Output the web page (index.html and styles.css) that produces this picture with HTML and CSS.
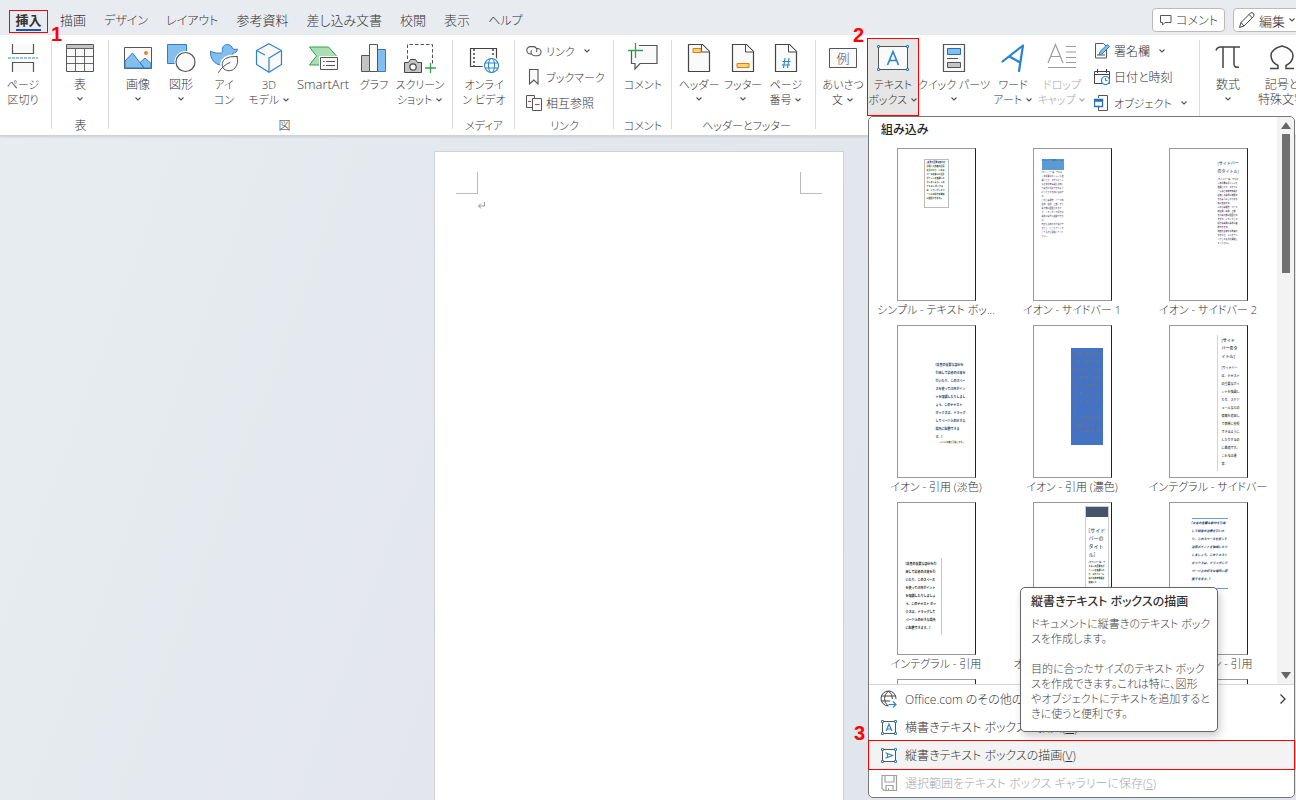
FILE: index.html
```html
<!DOCTYPE html>
<html lang="ja">
<head>
<meta charset="utf-8">
<title>文書 - 挿入</title>
<link rel="stylesheet" href="styles.css">
</head>
<body>
<svg class="defs" width="0" height="0" aria-hidden="true">
  <symbol id="chev" viewBox="0 0 8 6"><path d="M1.500 1.500 4 4 6.500 1.500" fill="none" stroke="currentColor" stroke-width="1.100"/></symbol>
</svg>
<div class="app">
  <header class="tabbar">
    <nav class="tabs">
      <button class="tab tab-active">挿入<span class="step step-1">1</span></button>
      <button class="tab">描画</button>
      <button class="tab kana">デザイン</button>
      <button class="tab kana">レイアウト</button>
      <button class="tab">参考資料</button>
      <button class="tab">差し込み文書</button>
      <button class="tab">校閲</button>
      <button class="tab">表示</button>
      <button class="tab kana">ヘルプ</button>
    </nav>
    <div class="actions">
      <button class="action kana"><svg width="14" height="14" viewBox="0 0 14 14"><path d="M1.500 2.500h10.500v7H6L3.500 12V9.500h-2z" fill="none" stroke="#555"/></svg>コメント</button>
      <button class="action"><svg width="18" height="18" viewBox="0 0 18 18"><path d="M1.500 16.500 3 11.500 12.500 2q1.500-1 3 .5 1.200 1.500 0 3L6 15zM11 3.500l3.500 3.500M3 11.500 6 15" fill="none" stroke="#444"/></svg>編集<svg class="chev"><use href="#chev"/></svg></button>
    </div>
  </header>

  <div class="ribbon">
    <section class="group group-break">
      <div class="tools">
        <button class="tool w46"><svg class="ico" viewBox="0 0 30 30"><g fill="#fafafa" stroke="#555" stroke-width="1.200"><path d="M4.500 1v9.500h21V1M4.500 29V19.500h21V29"/></g><path d="M0 15h30" stroke="#2b88c8" stroke-dasharray="3 1"/></svg><span>ページ<br>区切り</span></button>
      </div>
      <h2 class="group-name"></h2>
    </section>
    <section class="group group-table">
      <div class="tools">
        <button class="tool w46"><svg class="ico" viewBox="0 0 30 30"><path d="M1.500 1.500h27v27h-27z" fill="#fafafa" stroke="#555"/><path d="M2 2h26v3.500H2z" fill="#c4c4c4"/><path d="M1 5.500h28M1 13.500h28M1 20.500h28M10.500 6v22.500M19.500 6v22.500" stroke="#555" stroke-width=".9"/></svg><span class="kanji">表</span><svg class="chev"><use href="#chev"/></svg></button>
      </div>
      <h2 class="group-name kanji">表</h2>
    </section>
    <section class="group group-figure">
      <div class="tools">
        <button class="tool w44"><svg class="ico" viewBox="0 0 30 30"><path d="M1.500 4.500h27v21h-27z" fill="#fafafa" stroke="#555"/><path d="M2 18 9.500 10 21 25H2zM17 19.500l5-4.500 6 5.500V25h-7z" fill="#83beec" stroke="#2d7fc4"/><circle cx="23" cy="10" r="2" fill="#f08019"/></svg><span class="kanji">画像</span><svg class="chev"><use href="#chev"/></svg></button>
        <button class="tool w42"><svg class="ico" viewBox="0 0 30 30"><path d="M1.500 1.500h19v19h-19z" fill="#83beec" stroke="#2d7fc4"/><circle cx="19.500" cy="19" r="11" fill="#fff"/><circle cx="19.500" cy="19" r="9.500" fill="#fafafa" stroke="#555" stroke-width="1.200"/></svg><span class="kanji">図形</span><svg class="chev"><use href="#chev"/></svg></button>
        <button class="tool w44"><svg class="ico" viewBox="0 0 30 30"><g stroke-linejoin="round" stroke-linecap="round"><path d="M1.500 8.500q6 2.500 11 1.500 1.500-.5.800-2.500C13 3.500 15.500 1.500 18.500 1.500c2.500 0 4.500 1.800 5 4 1.500 1 3.500 1 5 .5-.5 3-2.500 4-4.500 4-1 8-4 12-11 12C5 22 1 15 1.500 8.500z" fill="#83beec" stroke="#2d7fc4"/><path d="M28 13.500q2 7-2 11.500c-3 3.500-8 3.500-11 1-3-3-2-8 1.500-10.500q4-2.500 11.500-2z" fill="#fff" stroke="#fff" stroke-width="4"/><path d="M28 13.500q2 7-2 11.500c-3 3.500-8 3.500-11 1-3-3-2-8 1.500-10.500q4-2.500 11.500-2z" fill="#fafafa" stroke="#555"/><path d="M9.500 29.500q4-7 11.500-10" fill="none" stroke="#555"/></g></svg><span>アイ<br>コン</span></button>
        <button class="tool w46"><svg class="ico" viewBox="0 0 30 30"><g fill="#fafafa" stroke="#3080c6" stroke-width="1.200"><path d="M15 .8 27.500 7.500v14L15 29.200 2.500 21.500v-14z"/><path d="M2.500 7.500 11 12M27.500 7.500 15 15v14"/></g></svg><span>3D<br>モデル <svg class="chev inl"><use href="#chev"/></svg></span></button>
        <button class="tool w62"><svg class="ico" viewBox="0 0 30 30"><path d="M1.500 4h19l8 9-8 9h-19l7-9z" fill="#a8dfb4" stroke="#35a04e"/><path d="M11 13h19v14H11z" fill="#fff"/><path d="M12.500 14.500h17v12h-17z" fill="#fafafa" stroke="#555"/><path d="M15 18.500h1.500m1.500 0h9M15 22.500h1.500m1.500 0h9" stroke="#555"/></svg><span class="latin">SmartArt</span></button>
        <button class="tool w40"><svg class="ico" viewBox="0 0 30 30"><g stroke="#555"><path d="M2.500 12.500h8v16h-8z" fill="#c4c4c4"/><path d="M18.500 6.500h8v22h-8z" fill="#83beec" stroke="#2d7fc4"/><path d="M10.500 1.500h8v27h-8z" fill="#fafafa"/></g></svg><span>グラフ</span></button>
        <button class="tool w52"><svg class="ico ico-wide" viewBox="0 0 34 30"><path d="M4.500 16V1.500h25v20" fill="none" stroke="#555" stroke-dasharray="3.500 2"/><path d="M1.500 19.500h4l2-3h5l2 3h4v10h-17z" fill="#c4c4c4" stroke="#444"/><circle cx="10" cy="24" r="3.200" fill="#fff" stroke="#444" stroke-width="1.200"/><path d="M27.500 20v10.500M22 25h11" stroke="#35a04e" stroke-width="1.300"/></svg><span>スクリーン<br>ショット <svg class="chev inl"><use href="#chev"/></svg></span></button>
      </div>
      <h2 class="group-name kanji">図</h2>
    </section>
    <section class="group group-media">
      <div class="tools">
        <button class="tool w52"><svg class="ico" viewBox="0 0 30 30"><path d="M1.500 5.500h26v18h-26z" fill="#fafafa" stroke="#444" stroke-width="1.200"/><path d="M5 6v18M24 6v18" stroke="#444" stroke-width="1.500" stroke-dasharray="2 2"/><circle cx="22.500" cy="22.500" r="9" fill="#fff"/><g fill="#fff" stroke="#2884cc" stroke-width="1.100"><circle cx="22.500" cy="22.500" r="7"/><ellipse cx="22.500" cy="22.500" rx="3" ry="7"/><path d="M16 20h13M16 25h13"/></g></svg><span>オンライ<br>ン ビデオ</span></button>
      </div>
      <h2 class="group-name">メディア</h2>
    </section>
    <section class="group group-link">
      <div class="rows">
        <button class="row"><svg width="16" height="16" viewBox="0 0 16 16"><g fill="none" stroke="#555" stroke-width="1.100"><path d="M6 11H4.500a3.700 3.700 0 0 1 0-7.400h3a3.700 3.700 0 0 1 3 5.500M10 5.500h1.500a3.600 3.600 0 0 1 0 7.200h-3a3.600 3.600 0 0 1-3-5.500"/></g></svg><span>リンク</span><svg class="chev"><use href="#chev"/></svg></button>
        <button class="row"><svg width="16" height="18" viewBox="0 0 16 18"><path d="M3.500 1.500h8.500v14.500L7.800 12l-4.300 4z" fill="#fafafa" stroke="#555" stroke-width="1.100"/></svg><span>ブックマーク</span></button>
        <button class="row kanji"><svg width="16" height="16" viewBox="0 0 16 16"><path d="M.5.5h8v12h-8z" fill="#fafafa" stroke="#555"/><path d="M2 6.500h3" stroke="#e33"/><path d="M6.500 3.500h9v12h-9z" fill="#fff" stroke="#555"/><path d="M9 9.500h4.500" stroke="#e33"/></svg><span>相互参照</span></button>
      </div>
      <h2 class="group-name">リンク</h2>
    </section>
    <section class="group group-comment">
      <div class="tools">
        <button class="tool w52"><svg class="ico" viewBox="0 0 30 30"><path d="M3.500 8V20.500h3.500V26l5-5.500h17V2.500H11" fill="#fafafa" stroke="#555" stroke-width="1.200"/><path d="M0 7.500h15M7.500 0v15" stroke="#35a04e" stroke-width="1.300"/></svg><span>コメント</span></button>
      </div>
      <h2 class="group-name">コメント</h2>
    </section>
    <section class="group group-header">
      <div class="tools">
        <button class="tool w44"><svg class="ico" viewBox="0 0 30 30"><path d="M4.500 1.500h14l7 7v20h-21z" fill="#fafafa" stroke="#444" stroke-width="1.200"/><path d="M17.500 1.500v7.500h8" fill="#fff" stroke="#444"/><path d="M9 5.500h8v4H9z" fill="#f8d27c" stroke="#e07b16"/></svg><span>ヘッダー</span><svg class="chev"><use href="#chev"/></svg></button>
        <button class="tool w44"><svg class="ico" viewBox="0 0 30 30"><path d="M4.500 1.500h14l7 7v20h-21z" fill="#fafafa" stroke="#444" stroke-width="1.200"/><path d="M17.500 1.500v7.500h8" fill="#fff" stroke="#444"/><path d="M9 20.500h12v4H9z" fill="#f8d27c" stroke="#e07b16"/></svg><span>フッター</span><svg class="chev"><use href="#chev"/></svg></button>
        <button class="tool w42"><svg class="ico" viewBox="0 0 30 30"><path d="M4.500 1.500h14l7 7v20h-21z" fill="#fafafa" stroke="#444" stroke-width="1.200"/><path d="M17.500 1.500v7.500h8" fill="#fff" stroke="#444"/><path d="M14 15l-1.500 10M18 15l-1.500 10M11.500 18.500h8M11 22h8" stroke="#2884cc" stroke-width="1.100"/></svg><span>ページ<br>番号 <svg class="chev inl"><use href="#chev"/></svg></span></button>
      </div>
      <h2 class="group-name">ヘッダーとフッター</h2>
    </section>
    <section class="group group-text">
      <div class="tools">
        <button class="tool w50"><svg class="ico" viewBox="0 0 30 30"><path d="M1.500 5.500h27v19h-27z" fill="#fafafa" stroke="#555"/><text x="15" y="20" text-anchor="middle" class="sample">例</text></svg><span>あいさつ<br>文 <svg class="chev inl"><use href="#chev"/></svg></span></button>
        <div class="anchor">
          <button class="tool w50 tool-open"><svg class="ico ico-wide" viewBox="0 0 34 30"><path d="M2.500 3.500h29v23h-29z" fill="#fafafa" stroke="#555"/><g fill="#fff" stroke="#2884cc"><path d="M1.500 2.500h2v2h-2zM30.500 2.500h2v2h-2zM1.500 25.500h2v2h-2zM30.500 25.500h2v2h-2z"/></g><path d="M11.500 22 17 8.500 22.500 22M13.500 17.500h7" fill="none" stroke="#2884cc" stroke-width="1.600"/></svg><span>テキスト<br>ボックス <svg class="chev inl"><use href="#chev"/></svg></span></button>
          <span class="step step-2">2</span>

          <div class="dropdown">
            <h3 class="dd-title">組み込み</h3>
            <div class="gallery">
              <div class="grid">
                <button class="card"><span class="sheet"><span class="copy boxed">[文書の重要な部分を引用して読者の注意を引いたり、このスペースを使って注目ポイントを強調したりしましょう。このテキスト ボックスは、ドラッグしてページ上の好きな場所に配置できます。]</span></span><span class="card-name">シンプル - テキスト ボッ...</span></button>
                <button class="card"><span class="sheet"><span class="copy side1"><span class="banner">[サイドバーのタイトル]</span>[サイドバーは、テキストの重要なポイントを強調したり、スケジュールなどの参考情報を追加して簡単に参照できるようにしたりするのに最適です。<br>これらは通常、ページの左側、右側、上部、または下部に配置されますが、ドラッグして好きな場所に簡単に移動できます。<br>内容を追加する準備ができたら、ここをクリックして入力を開始してください。]</span></span><span class="card-name">イオン - サイドバー 1</span></button>
                <button class="card"><span class="sheet"><span class="copy side2"><b>[サイドバー<br>のタイトル]</b>[サイドバーは、テキストの重要なポイントを強調したり、スケジュールなどの参考情報を追加して簡単に参照できるようにしたりするのに最適です。<br>これらは通常、ページの左側、右側、上部、または下部に配置されますが、ドラッグして好きな場所に簡単に移動できます。<br>内容を追加する準備ができたら、ここをクリックして入力を開始してください。]</span></span><span class="card-name">イオン - サイドバー 2</span></button>

                <button class="card"><span class="sheet"><span class="copy quote-light">[文書の重要な部分を引用して読者の注意を引いたり、このスペースを使って注目ポイントを強調したりしましょう。このテキスト ボックスは、ドラッグしてページ上の好きな場所に配置できます。]<small>[ここに出典を記載します。]</small></span></span><span class="card-name">イオン - 引用 (淡色)</span></button>
                <button class="card"><span class="sheet"><span class="copy quote-dark">[文書の重要な部分を引用して読者の注意を引いたり、このスペースを使って注目ポイントを強調したりしましょう。このテキスト ボックスは、ドラッグしてページ上の好きな場所に配置できます。]<small>[ここに出典を記載します。]</small></span></span><span class="card-name">イオン - 引用 (濃色)</span></button>
                <button class="card"><span class="sheet"><span class="copy integral"><b>[サイド<br>バーのタ<br>イトル]</b>[サイドバーは、テキストの重要なポイントを強調したり、スケジュールなどの情報を追加して簡単に参照できるようにしたりするのに最適です。<br>これらは通常、</span></span><span class="card-name">インテグラル - サイドバー</span></button>

                <button class="card"><span class="sheet"><span class="copy integral-quote">[文書の重要な部分を引用して読者の注意を引いたり、このスペースを使って注目ポイントを強調したりしましょう。このテキスト ボックスは、ドラッグしてページ上の好きな場所に配置できます。]</span></span><span class="card-name">インテグラル - 引用</span></button>
                <button class="card"><span class="sheet"><span class="copy austin"><b>[サイド<br>バーの<br>タイト<br>ル]</b>[サイドバーは、テキストの重要なポイントを強調したり、スケジュールなどの参考情報を追加して</span></span><span class="card-name">オースティン - サイドバー</span></button>
                <button class="card"><span class="sheet"><span class="copy austin-quote">[文書の重要な部分を引用して読者の注意を引いたり、このスペースを使って注目ポイントを強調したりしましょう。このテキスト ボックスは、ドラッグしてページ上の好きな場所に配置できます。]</span></span><span class="card-name">オースティン - 引用</span></button>

                <button class="card" aria-label="次の行 1"><span class="sheet"></span></button>
                <button class="card" aria-label="次の行 2"><span class="sheet"></span></button>
                <button class="card" aria-label="次の行 3"><span class="sheet"></span></button>
              </div>
            </div>
            <div class="scroll"><i class="arrow-up"></i><i class="thumb"></i><i class="arrow-down"></i></div>
            <div class="menu">
              <button class="item"><svg width="18" height="18" viewBox="0 0 18 18"><g fill="none" stroke="#444"><path d="M8.500 16A7.500 7.500 0 1 1 16 9M8 16Q4.500 13 4.500 8.500T8.500 1q4 3 4 8M1.500 6h14M1 11h9"/></g><path d="M8.500 14.500H16M13 11.500l3 3-3 3" fill="none" stroke="#2884cc" stroke-width="1.200"/></svg><span>Office.com のその他の</span><svg class="more" width="8" height="12" viewBox="0 0 8 12"><path d="M1.500 1.500 6 6l-4.500 4.500" fill="none" stroke="#333" stroke-width="1.200"/></svg></button>
              <button class="item"><svg width="18" height="18" viewBox="0 0 18 18"><path d="M2.500 3.500h13v12h-13z" fill="#fff" stroke="#555"/><g fill="#fff" stroke="#2884cc"><path d="M1.500 2.500h2v2h-2zM14.500 2.500h2v2h-2zM1.500 14.500h2v2h-2zM14.500 14.500h2v2h-2z"/></g><path d="M6.200 13 9 6l2.800 7M7 11h4" fill="none" stroke="#2884cc" stroke-width="1.200"/></svg><span>横書きテキスト ボックスの描画(<u>H</u>)</span></button>
              <button class="item item-hot"><svg width="18" height="18" viewBox="0 0 18 18"><path d="M2.500 3.500h13v12h-13z" fill="#fff" stroke="#555"/><g fill="#fff" stroke="#2884cc"><path d="M1.500 2.500h2v2h-2zM14.500 2.500h2v2h-2zM1.500 14.500h2v2h-2zM14.500 14.500h2v2h-2z"/></g><path d="M5.500 6.700 12.500 9.500l-7 2.800M7.500 7.500v4" fill="none" stroke="#2884cc" stroke-width="1.200"/></svg><span>縦書きテキスト ボックスの描画(<u>V</u>)</span><span class="step step-3">3</span></button>
              <button class="item" disabled><svg width="18" height="18" viewBox="0 0 18 18"><g fill="none" stroke="#a0a0a0" stroke-width="1.200"><path d="M2 1.500h14.500v15H4L2 14.500zM5 1.500v6.500h9V1.500M6 16.500V11.500h7v5M8.500 14v2.500"/></g></svg><span>選択範囲をテキスト ボックス ギャラリーに保存(<u>S</u>)</span></button>
            </div>
            <div class="tooltip" role="tooltip">
              <strong>縦書きテキスト ボックスの描画</strong>
              <p>ドキュメントに縦書きのテキスト ボック<br>スを作成します。</p>
              <p>目的に合ったサイズのテキスト ボック<br>スを作成できます。これは特に、図形<br>やオブジェクトにテキストを追加すると<br>きに使うと便利です。</p>
            </div>
          </div>
        </div>
        <button class="tool w72"><svg class="ico" viewBox="0 0 30 30"><path d="M4.500 1.500h21v27h-21z" fill="#fafafa" stroke="#555" stroke-width="1.200"/><path d="M8.500 5.500h13v6h-13z" fill="#83beec" stroke="#2370b8"/><path d="M8 15.500h11" stroke="#555"/><path d="M8.500 19.500h13v5h-13z" fill="#c4c4c4" stroke="#555"/></svg><span>クイック パーツ</span><svg class="chev"><use href="#chev"/></svg></button>
        <button class="tool w46"><svg class="ico" viewBox="0 0 30 30"><path d="M4.500 18.500 25 2.500 21 28M11.500 13.500 22 19.500" fill="none" stroke="#2884cc" stroke-width="2.200" stroke-linecap="round" stroke-linejoin="round"/></svg><span>ワード<br>アート <svg class="chev inl"><use href="#chev"/></svg></span></button>
        <button class="tool w52" disabled><svg class="ico" viewBox="0 0 30 30"><g fill="none" stroke="#9c9c9c" stroke-width="1.200"><path d="M1 20 8.500 1.500 16 20M4 13.500h9M19 3.500h10M19 9h10M19 14.500h10M19 19.500h10M1 24.500h28"/></g></svg><span>ドロップ<br>キャップ <svg class="chev inl"><use href="#chev"/></svg></span></button>
        <div class="rows rows-text">
          <button class="row kanji"><svg width="16" height="18" viewBox="0 0 16 18"><path d="M1.500 1.500h8l3 3V16h-11z" fill="#fafafa" stroke="#555"/><path d="M3 13h8" stroke="#555"/><path d="M5 13l1-3.500 7.500-7 2 2L8 12z" fill="#83beec" stroke="#2884cc"/></svg><span>署名欄</span><svg class="chev"><use href="#chev"/></svg></button>
          <button class="row kanji"><svg width="16" height="16" viewBox="0 0 16 16"><path d="M.5 2.500h15v12H.5zM.5 5.500h15M3.500 0v4M12.500 0v4" fill="#fafafa" stroke="#444"/><circle cx="11.500" cy="11.500" r="4" fill="#fff" stroke="#2884cc" stroke-width="1.200"/><path d="M11.500 9v2.500h2" fill="none" stroke="#2884cc"/></svg><span>日付と時刻</span></button>
          <button class="row"><svg width="16" height="16" viewBox="0 0 16 16"><path d="M4.500 3V.5h9v15h-9V12" fill="#fafafa" stroke="#555"/><path d="M.5 4.500h8v7h-8zM.5 6h8" fill="#fff" stroke="#2370b8" stroke-width="1.300"/></svg><span>オブジェクト</span><svg class="chev"><use href="#chev"/></svg></button>
        </div>
      </div>
      <h2 class="group-name"></h2>
    </section>
    <section class="group group-symbol">
      <div class="tools">
        <button class="tool w50"><svg class="ico" viewBox="0 0 30 30"><path d="M3 7.500Q4 4 8 4h19M10 4v21M21 4v17q0 4 5 3" fill="none" stroke="#444" stroke-width="1.500"/></svg><span class="kanji">数式</span><svg class="chev"><use href="#chev"/></svg></button>
        <button class="tool w58"><svg class="ico" viewBox="0 0 30 30"><path d="M3 25.500h8v-3Q4 19 4 12.500T15 3q11 3 11 9.500T19 22.500v3h8" fill="none" stroke="#444" stroke-width="1.500"/></svg><span class="kanji">記号と<br>特殊文字</span></button>
      </div>
      <h2 class="group-name"></h2>
    </section>
  </div>

  <main class="workspace">
    <article class="page">
      <div class="margins"><i class="corner corner-l"></i><i class="corner corner-r"></i></div>
      <svg class="mark" width="9" height="9" viewBox="0 0 9 9"><path d="M7.500 1v4H1.500M4 2.500 1.500 5 4 7.500" fill="none" stroke="#999"/></svg>
    </article>
  </main>
</div>
</body>
</html>
```
FILE: styles.css
```css
* { box-sizing: border-box; }
body {
  margin: 0;
  font-family: "Open Sans", "Noto Sans CJK JP", sans-serif;
  font-feature-settings: "palt";
  font-weight: 300;
  font-size: 11px;
  color: #333;
  overflow: hidden;
}
button {
  font: inherit;
  font-feature-settings: inherit;
  color: inherit;
  background: none;
  border: 0;
  padding: 0;
  margin: 0;
}
h2, h3, p { margin: 0; font-weight: inherit; font-size: inherit; }
svg { flex: none; }
.defs { position: absolute; }
.app { display: flex; flex-direction: column; height: 100vh; background: linear-gradient(110deg, #e8edf1 0%, #e3e7ed 45%, #dfe4ec 100%); }
.kanji { font-size: 12px; }
.latin { font-size: 13px; }

/* Tabs */
.tabbar { display: flex; justify-content: space-between; height: 35px; flex: none; background: #e8ecf0; }
.tabs { display: flex; gap: 18px; padding: 10px 0 2px 9px; font-size: 13px; line-height: 21px; }
.tab { display: flex; white-space: nowrap; }
.tab.kana, .action.kana { font-size: 12px; }
.tab-active { position: relative; z-index: 3; width: 39px; justify-content: center; margin-right: -6px; font-weight: 700; border: 1px solid #f00; line-height: 18px; }
.tab-active::after { content: ""; position: absolute; left: 6px; right: 6px; bottom: 1px; height: 2px; background: #1b57b0; }
.actions { display: flex; gap: 8px; align-items: center; padding-top: 5px; margin-right: -5px; }
.action {
  display: flex; align-items: center; gap: 3px; height: 24px; padding: 0 6px;
  background: #fff; border: 1px solid #bbb; border-radius: 4px; font-size: 13px; white-space: nowrap;
}
.action:last-child { padding: 0 4px; }
.step { position: absolute; font: 700 20px/20px "Liberation Sans", sans-serif; color: #f00; }
.step-1 { left: 41px; top: 13px; }
.step-2 { left: -15px; top: -14px; }
.step-3 { left: -15px; top: -18px; }

/* Ribbon */
.ribbon { display: flex; flex: none; height: 101px; background: #fff; border-bottom: 1px solid #cfd3d8; box-shadow: 0 1px 2px #c8ccd2; position: relative; z-index: 2; }
.group { display: flex; flex-direction: column; justify-content: space-between; padding: 4px 0 1px; flex: none; position: relative; }
.group:not(:last-child)::after { content: ""; position: absolute; right: 0; top: 5px; bottom: 6px; width: 1px; background: #dcdcdc; }
.group-name { text-align: center; line-height: 17px; min-height: 17px; white-space: nowrap; }
.tools { display: flex; height: 76px; }
.tool { display: flex; flex-direction: column; align-items: center; padding-top: 4px; line-height: 15px; white-space: nowrap; height: 76px; flex: none; }
.tool > span { margin-top: 4px; }
.ico { width: 30px; height: 30px; }
.ico-wide { width: 34px; }
.chev { width: 8px; height: 6px; color: #555; }
.tool > .chev { margin-top: 4px; }
.inl { vertical-align: 1px; }
.sample { font-size: 13px; fill: #555; }
.w40 { width: 40px; } .w42 { width: 42px; } .w44 { width: 44px; } .w46 { width: 46px; }
.w50 { width: 50px; } .w52 { width: 52px; } .w58 { width: 58px; } .w62 { width: 62px; } .w72 { width: 72px; }
button:disabled, button:disabled .chev { color: #a8a8a8; }
.group-break { width: 52px; }
.group-table { width: 57px; padding-left: 5px; padding-right: 5px; }
.group-figure { width: 344px; padding-left: 7px; }
.group-media { width: 62px; padding-left: 5px; padding-right: 5px; }
.group-link { width: 99px; }
.group-comment { width: 58px; padding-left: 3px; padding-right: 3px; }
.group-header { width: 144px; padding-left: 5px; }
.group-text { width: 384px; padding-left: 2px; }
.group-symbol { padding-left: 3px; }
.rows { display: flex; flex-direction: column; gap: 2px; padding-left: 11px; }
.rows-text { padding-left: 6px; }
.row { display: flex; align-items: center; gap: 4px; height: 24px; white-space: nowrap; }
.row .chev { margin-left: 4px; }
.anchor { position: relative; }
.tool-open { background: #e6e6e6; outline: 1px solid #f00; }

/* Text box gallery */
.dropdown {
  position: absolute; left: 0; top: 77px; width: 427px; z-index: 5;
  display: grid; grid-template-columns: 1fr 17px; grid-template-rows: 31px 536px auto;
  background: #fff; border: 1px solid #777; border-radius: 5px;
}
.dd-title { padding-left: 12px; line-height: 26px; font-size: 12px; font-weight: 500; color: #222; }
.gallery { grid-row: 2; overflow: hidden; }
.grid { display: grid; grid-template-columns: repeat(3, 136px); }
.card { display: flex; flex-direction: column; align-items: center; height: 177px; padding-right: 2px; }
.sheet { display: block; width: 79px; height: 153px; border: 1px solid #999; border-right-color: #222; overflow: hidden; flex: none; }
.card-name { line-height: 18px; white-space: nowrap; }
.copy { display: block; text-align: left; font-size: 2px; line-height: 4px; font-weight: 700; color: #222; font-feature-settings: normal; word-break: break-all; }
.copy b, .copy small { display: block; font-weight: 500; white-space: nowrap; }
.boxed { width: 25px; height: 49px; margin: 10px 0 0 26px; padding: 1px 2px; border: 1px solid #bbb; }
.side1 { width: 22px; margin: 10px 0 0 8px; font-weight: 400; }
.banner { display: block; height: 11px; margin-bottom: 1px; background: #5a9bd5; color: #444; }
.side2 { width: 21px; margin: 11px 0 0 48px; font-weight: 500; }
.side2 b { font-size: 4px; line-height: 8px; color: #44546a; margin-bottom: 2px; }
.quote-light { width: 30px; margin: 35px 0 0 38px; font-size: 3px; line-height: 8px; color: #223a6a; }
.quote-light small, .quote-dark small { font-size: 2px; line-height: 4px; margin-left: 4px; color: #222; }
.quote-dark { width: 32px; height: 97px; margin: 22px 0 0 37px; padding: 2px; background: #4472c4; color: #777; font-size: 3px; line-height: 8px; font-weight: 400; }
.quote-dark small { color: #777; }
.integral { width: 23px; height: 136px; margin: 9px 0 0 47px; padding: 2px 0 0 4px; border-left: 1px solid #f5c9ae; font-size: 3px; line-height: 8px; font-weight: 500; }
.integral b { font-size: 4px; margin-bottom: 3px; }
.integral-quote { width: 36px; height: 77px; margin: 55px 0 0 8px; padding: 2px 4px 0 0; border-right: 1px solid #f5b9a0; font-size: 3px; line-height: 8px; }
.austin { width: 24px; height: 146px; margin: 3px 0 0 51px; padding: 19px 2px 0 3px; border: 1px solid #ccc; background: linear-gradient(#44546a 10px, #fff 10px); }
.austin b { font-size: 5px; line-height: 8px; color: #44546a; margin-bottom: 3px; }
.austin-quote { width: 36px; height: 71px; margin: 15px 0 0 22px; border-top: 1px solid #6f9bd8; border-bottom: 1px solid #6f9bd8; font-size: 3px; line-height: 8px; font-style: italic; color: #223a6a; }
.scroll { grid-column: 2; grid-row: 1 / 3; display: flex; flex-direction: column; align-items: center; padding: 5px 0; background: #f3f3f3; border-radius: 0 5px 0 0; }
.arrow-up { border: 5px solid transparent; border-top: 0; border-bottom: 7px solid #666; }
.arrow-down { margin-top: auto; border: 5px solid transparent; border-bottom: 0; border-top: 7px solid #666; }
.thumb { width: 8px; height: 139px; margin-top: 5px; background: #707070; }
.menu { grid-column: 1 / 3; border-top: 1px solid #d8d8d8; font-size: 12px; }
.item { display: flex; align-items: center; gap: 7px; width: 100%; height: 28px; padding: 0 7px 0 11px; white-space: nowrap; position: relative; }
.item-hot { background: #f3f3f3; outline: 1px solid #f00; }
.more { margin-left: auto; }
.tooltip {
  position: absolute; left: 151px; top: 470px; width: 198px; padding: 6px 10px 10px;
  display: flex; flex-direction: column; background: #fff; border: 1px solid #666; border-radius: 5px;
  box-shadow: 2px 4px 8px #0003; line-height: 15px; white-space: nowrap; color: #444;
}
.tooltip strong { font-size: 12px; font-weight: 500; line-height: 16px; margin-bottom: 6px; color: #333; }
.tooltip p + p { margin-top: 15px; }

/* Document */
.workspace { flex: 1; display: flex; justify-content: center; padding: 15px 18px 0 0; overflow: hidden; }
.page { width: 410px; background: #fff; border: 1px solid #cdd3da; border-bottom: 0; padding: 20px 21px 0; }
.margins { display: flex; justify-content: space-between; }
.corner { width: 22px; height: 22px; border-bottom: 1px solid #bbb; }
.corner-l { border-right: 1px solid #bbb; }
.corner-r { border-left: 1px solid #bbb; }
.mark { display: block; margin: 7px 0 0 21px; }
```
